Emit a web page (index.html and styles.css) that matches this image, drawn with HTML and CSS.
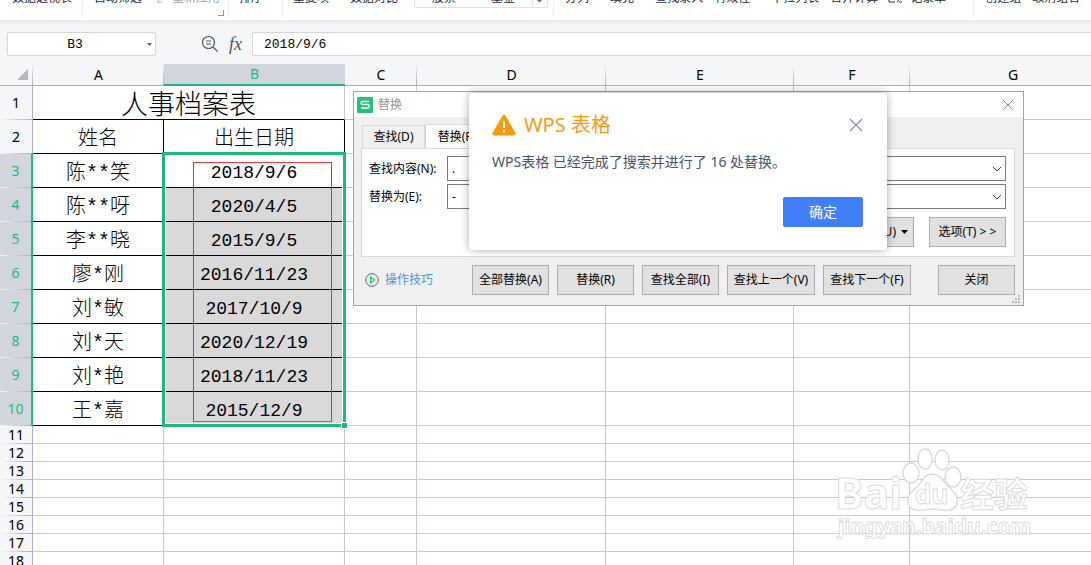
FILE: index.html
```html
<!DOCTYPE html>
<html lang="zh-CN">
<head>
<meta charset="utf-8">
<title>WPS 表格</title>
<link rel="stylesheet" href="styles.css">
</head>
<body>
<header class="ribbon">
  <div class="group g-pivot"><span>数据透视表</span></div>
  <div class="group g-filter">
    <span>自动筛选</span>
    <span class="muted"><svg class="reapply" width="12" height="14" viewBox="0 0 12 14"><path d="M2 2v10h4M7 8l4-3M8 9l3-2" fill="none" stroke="#aaa"/></svg>重新应用</span>
    <i class="corner"></i>
  </div>
  <div class="group g-sort"><span>排序</span></div>
  <div class="group g-dup">
    <span>重复项</span><span>数据对比</span>
    <div class="gallery"><span>股票</span><span>基金</span><svg class="more" width="15" height="16" viewBox="0 0 15 16"><path d="M.5 0v16" stroke="#dfe1e6"/><path d="M6 5h3v4h2l-3.500 3.500L4 9h2z" fill="#606a86"/></svg></div>
  </div>
  <div class="group g-tools">
    <span>分列</span><span>填充</span><span>查找录入</span><span class="near">有效性</span><span>下拉列表</span><span class="near">合并计算</span>
    <svg class="form-icon" width="15" height="16" viewBox="0 0 15 16"><path d="M7 3H1v9h6M4 8h4M14 6l-5 6M11 12h3" fill="none" stroke="#333"/></svg>
    <span class="record">记录单</span>
  </div>
  <div class="group g-outline"><span>创建组</span><span class="near">取消组合</span></div>
</header>

<section class="formula-bar">
  <div class="name-box"><input aria-label="名称框" value="B3"><svg width="7" height="5" viewBox="0 0 7 5"><path d="M1 1h5L3.500 4z" fill="#5c6680"/></svg></div>
  <div class="fx-icons">
    <svg width="18" height="18" viewBox="0 0 18 18"><circle cx="7.500" cy="7.500" r="6" fill="none" stroke="#4a5268" stroke-width="1.200"/><path d="M5 6h5M5 9h5M12 12l4.500 4.500" fill="none" stroke="#4a5268" stroke-width="1.200"/></svg>
    <em>fx</em>
  </div>
  <input class="formula" aria-label="编辑栏" value="2018/9/6">
</section>

<main class="sheet">
<table class="grid">
<colgroup><col class="c-head"><col class="c-a"><col class="c-b"><col class="c-c"><col class="c-d"><col class="c-e"><col class="c-f"><col class="c-g"></colgroup>
<thead><tr><th class="all"><svg width="11" height="11" viewBox="0 0 11 11"><path d="M11 0v11H0z" fill="#b7b7b7"/></svg></th><th>A</th><th class="on">B</th><th>C</th><th>D</th><th>E</th><th>F</th><th>G</th></tr></thead>
<tbody>
<tr class="tall"><th>1</th><td class="title" colspan="2">人事档案表</td><td></td><td></td><td></td><td></td><td></td></tr>
<tr class="tall"><th>2</th><td class="cell">姓名</td><td class="cell">出生日期</td><td></td><td></td><td></td><td></td><td></td></tr>
<tr class="tall on"><th>3</th><td class="cell">陈**笑</td><td class="cell date first">2018/9/6</td><td></td><td></td><td></td><td></td><td></td></tr>
<tr class="tall on"><th>4</th><td class="cell">陈**呀</td><td class="cell date">2020/4/5</td><td></td><td></td><td></td><td></td><td></td></tr>
<tr class="tall on"><th>5</th><td class="cell">李**晓</td><td class="cell date">2015/9/5</td><td></td><td></td><td></td><td></td><td></td></tr>
<tr class="tall on"><th>6</th><td class="cell">廖*刚</td><td class="cell date">2016/11/23</td><td></td><td></td><td></td><td></td><td></td></tr>
<tr class="tall on"><th>7</th><td class="cell">刘*敏</td><td class="cell date">2017/10/9</td><td></td><td></td><td></td><td></td><td></td></tr>
<tr class="tall on"><th>8</th><td class="cell">刘*天</td><td class="cell date">2020/12/19</td><td></td><td></td><td></td><td></td><td></td></tr>
<tr class="tall on"><th>9</th><td class="cell">刘*艳</td><td class="cell date">2018/11/23</td><td></td><td></td><td></td><td></td><td></td></tr>
<tr class="tall on"><th>10</th><td class="cell">王*嘉</td><td class="cell date">2015/12/9</td><td></td><td></td><td></td><td></td><td></td></tr>
<tr><th>11</th><td></td><td></td><td></td><td></td><td></td><td></td><td></td></tr>
<tr><th>12</th><td></td><td></td><td></td><td></td><td></td><td></td><td></td></tr>
<tr><th>13</th><td></td><td></td><td></td><td></td><td></td><td></td><td></td></tr>
<tr><th>14</th><td></td><td></td><td></td><td></td><td></td><td></td><td></td></tr>
<tr><th>15</th><td></td><td></td><td></td><td></td><td></td><td></td><td></td></tr>
<tr><th>16</th><td></td><td></td><td></td><td></td><td></td><td></td><td></td></tr>
<tr><th>17</th><td></td><td></td><td></td><td></td><td></td><td></td><td></td></tr>
<tr><th>18</th><td></td><td></td><td></td><td></td><td></td><td></td><td></td></tr>
</tbody>
</table>
<div class="selection"><div class="mark"></div><i class="handle"></i></div>

<svg class="watermark" width="210" height="100" viewBox="0 0 210 100">
  <g fill="#fff" stroke="#dcdcdc" stroke-width="1.500">
    <ellipse cx="81" cy="34" rx="8" ry="10"/><ellipse cx="95" cy="20" rx="7" ry="10"/><ellipse cx="112" cy="21" rx="7" ry="10"/><ellipse cx="123" cy="38" rx="8" ry="10"/>
    <path d="M102 35c8 0 12 8 17 13s10 9 8 16-9 8-15 7-13-1-19 0-14 0-15-8 4-10 9-15 7-13 15-13z"/>
  </g>
  <g class="wm-text">
    <text class="wm-big" x="5" y="70">Bai</text><text class="wm-du" x="85" y="65">du</text><text class="wm-cn" x="130" y="68">经验</text><text class="wm-url" x="8" y="95">jingyan.baidu.com</text>
  </g>
</svg>

<section class="dialog" aria-label="替换">
  <div class="titlebar">
    <svg width="16" height="16" viewBox="0 0 16 16"><rect width="16" height="16" rx="1" fill="#29be7d"/><path d="M12 4.500H5.500a1.500 1.500 0 0 0 0 3h5a1.500 1.500 0 0 1 0 3.500H4" fill="none" stroke="#fff" stroke-width="1.300"/></svg>
    <span>替换</span>
    <button class="x" aria-label="关闭替换"><svg width="12" height="12" viewBox="0 0 12 12"><path d="M1 1l10 10M11 1L1 11" stroke="#888"/></svg></button>
  </div>
  <div class="body">
    <div class="tabs"><button class="tab">查找(D)</button><button class="tab active">替换(P)</button></div>
    <div class="panel">
      <div class="field"><label for="find">查找内容(N):</label><div class="combo"><input id="find" value="."><svg width="10" height="6" viewBox="0 0 10 6"><path d="M1 1l4 4 4-4" fill="none" stroke="#444"/></svg></div></div>
      <div class="field"><label for="with">替换为(E):</label><div class="combo"><input id="with" value="-"><svg width="10" height="6" viewBox="0 0 10 6"><path d="M1 1l4 4 4-4" fill="none" stroke="#444"/></svg></div></div>
      <div class="options"><button class="btn special">特殊内容(U)<svg width="7" height="4" viewBox="0 0 7 4"><path d="M0 0h7L3.500 4z"/></svg></button><button class="btn">选项(T) &gt; &gt;</button></div>
    </div>
    <div class="actions">
      <a class="tips" href="#"><svg width="14" height="14" viewBox="0 0 14 14" fill="none"><circle cx="7" cy="7" r="6.300" stroke="#666"/><path d="M5.500 4v6L9.500 7z" stroke="#29be7d" stroke-width="1.200"/></svg>操作技巧</a>
      <button class="btn">全部替换(A)</button><button class="btn">替换(R)</button><button class="btn">查找全部(I)</button><button class="btn wide">查找上一个(V)</button><button class="btn wide">查找下一个(F)</button><button class="btn last">关闭</button>
    </div>
  </div>
  <svg class="grip" width="9" height="9" viewBox="0 0 9 9" fill="#b8b8b8"><path d="M6 0h2v2H6zM3 3h2v2H3zM6 3h2v2H6zM0 6h2v2H0zM3 6h2v2H3zM6 6h2v2H6z"/></svg>
</section>

<section class="alert" role="alertdialog" aria-label="WPS 表格">
  <div class="alert-head">
    <svg width="24" height="22" viewBox="0 0 24 22"><path d="M10.500 1.500q1.500-2 3 0l10 17.500q.800 2-1.500 2.500H2Q-.300 21 .500 19z" fill="#fa9b0f"/><path d="M12 7v7M12 16v2.500" stroke="#fff" stroke-width="2"/></svg>
    <h1>WPS 表格</h1>
    <button class="x" aria-label="关闭提示"><svg width="14" height="14" viewBox="0 0 14 14"><path d="M1 1l12 12M13 1L1 13" stroke="#858da3" stroke-width="1.200"/></svg></button>
  </div>
  <p>WPS表格 已经完成了搜索并进行了 16 处替换。</p>
  <button class="ok">确定</button>
</section>
</main>
</body>
</html>
```
FILE: styles.css
```css
* { box-sizing: border-box; }
html, body { height: 100%; }
body {
  margin: 0;
  display: flex;
  flex-direction: column;
  overflow: hidden;
  background: #fff;
  color: #000;
  font: 12px/16px "Noto Sans", "Noto Sans CJK SC", sans-serif;
}
button, input { font: inherit; color: inherit; margin: 0; padding: 0; border: 0; background: none; outline: 0; }
svg { display: block; flex: none; }

/* ribbon: scrolled so only its lower edge shows */
.ribbon { display: flex; flex: none; height: 20px; overflow: hidden; color: #262b3a; white-space: nowrap; }
.group { display: flex; flex: none; position: relative; height: 28px; margin-top: -10px; border-right: 1px solid #eceef1; }
.group > span + span { margin-left: 21px; }
.group > span.near { margin-left: 11px; }
.g-pivot { padding: 0 10px 0 12px; }
.g-filter { padding: 0 8px 0 11px; }
.g-filter > span + span { margin-left: 14px; }
.muted { display: flex; gap: 4px; color: #a3a6ad; }
.corner { position: absolute; right: 4px; bottom: 2px; width: 6px; height: 6px; border: solid #8d94a8; border-width: 0 1px 1px 0; }
.g-sort { padding: 0 19px 0 10px; }
.g-dup { padding: 0 5px 0 10px; }
.gallery { display: flex; width: 134px; height: 18px; margin-left: 16px; padding-left: 17px; border: 1px solid #dfe1e6; border-top: 0; border-radius: 2px; }
.gallery span + span { margin-left: 35px; }
.more { margin-left: auto; }
.g-tools { padding: 0 27px 0 11px; }
.form-icon { margin-left: 10px; }
.group > span.record { margin-left: 7px; }
.g-outline { padding-left: 11px; border-right: 0; }

.formula-bar { display: flex; flex: none; height: 44px; padding: 12px 0 8px 7px; background: linear-gradient(#e7e8ea, #f5f6f8 5px); font-family: "Liberation Mono", monospace; font-size: 13px; }
.name-box { display: flex; align-items: center; width: 149px; height: 24px; padding-right: 2px; border: 1px solid #d3d6dd; border-radius: 2px; background: #fff; }
.name-box input { flex: 1; min-width: 0; padding: 2px 4px 0 0; text-align: center; }
.fx-icons { display: flex; align-items: center; gap: 10px; width: 96px; padding-left: 45px; color: #4a5268; }
.fx-icons em { font: italic 18px/20px "Liberation Serif", serif; }
.formula { flex: 1; min-width: 0; height: 24px; padding-left: 11px; border: 1px solid #d3d6dd; border-right: 0; border-radius: 2px 0 0 2px; background: #fff; }

.sheet { position: relative; flex: 1; min-height: 0; overflow: hidden; }
.grid { table-layout: fixed; width: 1116px; min-width: 100%; border-collapse: separate; border-spacing: 0; }
.c-head { width: 33px; } .c-a { width: 131px; } .c-b { width: 181px; } .c-c { width: 72px; }
.c-d { width: 189px; } .c-e { width: 188px; } .c-f { width: 116px; } .c-g { width: 206px; }
.grid th, .grid td { height: 18px; padding: 0; text-align: center; vertical-align: middle; overflow: hidden; white-space: nowrap; }
.grid th { font: 14px/16px "Noto Sans", sans-serif; }
.grid thead th { height: 22px; border-bottom: 1px solid #a5afc7; background: linear-gradient(#f5f6f8, #a5afc7) right / 1px 100% no-repeat #f5f6f8; }
.grid thead th.on { color: #1fb97b; background: #d2d5dd; border-bottom: 2px solid #1fb97b; }
.all svg { margin-left: 17px; }
.grid td { border: solid #c3cadb; border-width: 0 1px 1px 0; }
.grid tbody th { border-right: 1px solid #a5afc7; background: linear-gradient(90deg, #f5f6f8, #a5afc7) bottom / 100% 1px no-repeat #f5f6f8; }
.grid .tall th, .grid .tall td { height: 34px; }
.grid .on th { color: #1fb97b; border-right: 2px solid #1fb97b; background-color: #d2d5dd; }
.grid td.title { font: 27px/30px "Noto Sans CJK SC", sans-serif; font-weight: 300; border-bottom-color: #000; }
.grid td.cell { padding-top: 6px; border-color: #000; font: 300 20px/24px "Liberation Mono", "Noto Sans CJK SC", monospace; }
.grid td.date { font-size: 18px; background: #d9d9d9; padding-top: 5px; }
.grid td.first { background: #fff; }

.selection { position: absolute; left: 162px; top: 88px; width: 184px; height: 275px; border: 3px solid #1fb97b; box-shadow: inset 0 0 0 1px #fff; padding: 7px 11px 2px 28px; }
.mark { height: 100%; border: 1px solid #8c5558; border-top-color: #f0383c; border-bottom-color: #e5484c; }
.handle { position: absolute; right: -5px; bottom: -5px; width: 7px; height: 7px; border: 1px solid #fff; background: #1fb97b; }

.watermark { position: absolute; left: 830px; top: 375px; }
.wm-text { fill: #fff; stroke: #dcdcdc; stroke-width: 1px; font-family: "Noto Sans", "Noto Sans CJK SC", sans-serif; font-weight: 700; }
.wm-big { font-size: 43px; } .wm-du { font-size: 26px; } .wm-cn { font-size: 34px; } .wm-url { font-size: 21px; }

.dialog { position: absolute; left: 353px; top: 27px; width: 671px; border: 1px solid #a4a4a4; background: #f0f0f0; }
.titlebar { display: flex; align-items: center; gap: 5px; height: 25px; padding: 0 9px 0 3px; background: #fff; color: #929292; }
.x { display: flex; margin-left: auto; }
.body { padding: 7px 8px 10px 7px; }
.tabs { display: flex; align-items: flex-end; height: 24px; padding-left: 1px; }
.tab { width: 63px; height: 23px; border: 1px solid #d9d9d9; border-bottom: 0; }
.tab.active { width: 64px; height: 24px; background: #fff; }
.panel { padding: 7px 8px 9px 7px; border: 1px solid #d9d9d9; background: #fff; }
.field { display: flex; align-items: center; margin-bottom: 3px; }
.field label { width: 78px; }
.combo { display: flex; flex: 1; align-items: center; height: 25px; padding: 0 3px 0 4px; border: 1px solid #7a7a7a; }
.combo input { flex: 1; min-width: 0; }
.options { display: flex; justify-content: flex-end; gap: 15px; margin-top: 8px; }
.btn { width: 77px; height: 30px; border: 1px solid #adadad; background: #e1e1e1; white-space: nowrap; }
.special { display: flex; align-items: center; justify-content: flex-end; gap: 5px; width: 94px; padding-right: 5px; }
.actions { display: flex; align-items: center; gap: 8px; margin-top: 8px; }
.wide { width: 88px; }
.last { margin-left: auto; }
.tips { display: flex; align-items: center; gap: 6px; width: 103px; padding-left: 4px; color: #4b91ef; text-decoration: none; }
.grip { position: absolute; right: 2px; bottom: 1px; }

.alert { position: absolute; left: 469px; top: 29px; width: 418px; padding: 20px 24px 23px 23px; border-radius: 4px; background: #fff; box-shadow: 0 0 8px rgba(0, 0, 0, .35); }
.alert-head { display: flex; align-items: center; gap: 8px; height: 24px; }
.alert h1 { margin: 0; color: #fa9b0f; font-size: 20px; line-height: 24px; font-weight: 400; }
.alert p { margin: 14px 0 25px; color: #48536a; font-size: 14px; line-height: 21px; }
.ok { display: block; width: 80px; height: 30px; margin-left: auto; border-radius: 2px; background: #417ff9; color: #fff; font-size: 14px; }
```
